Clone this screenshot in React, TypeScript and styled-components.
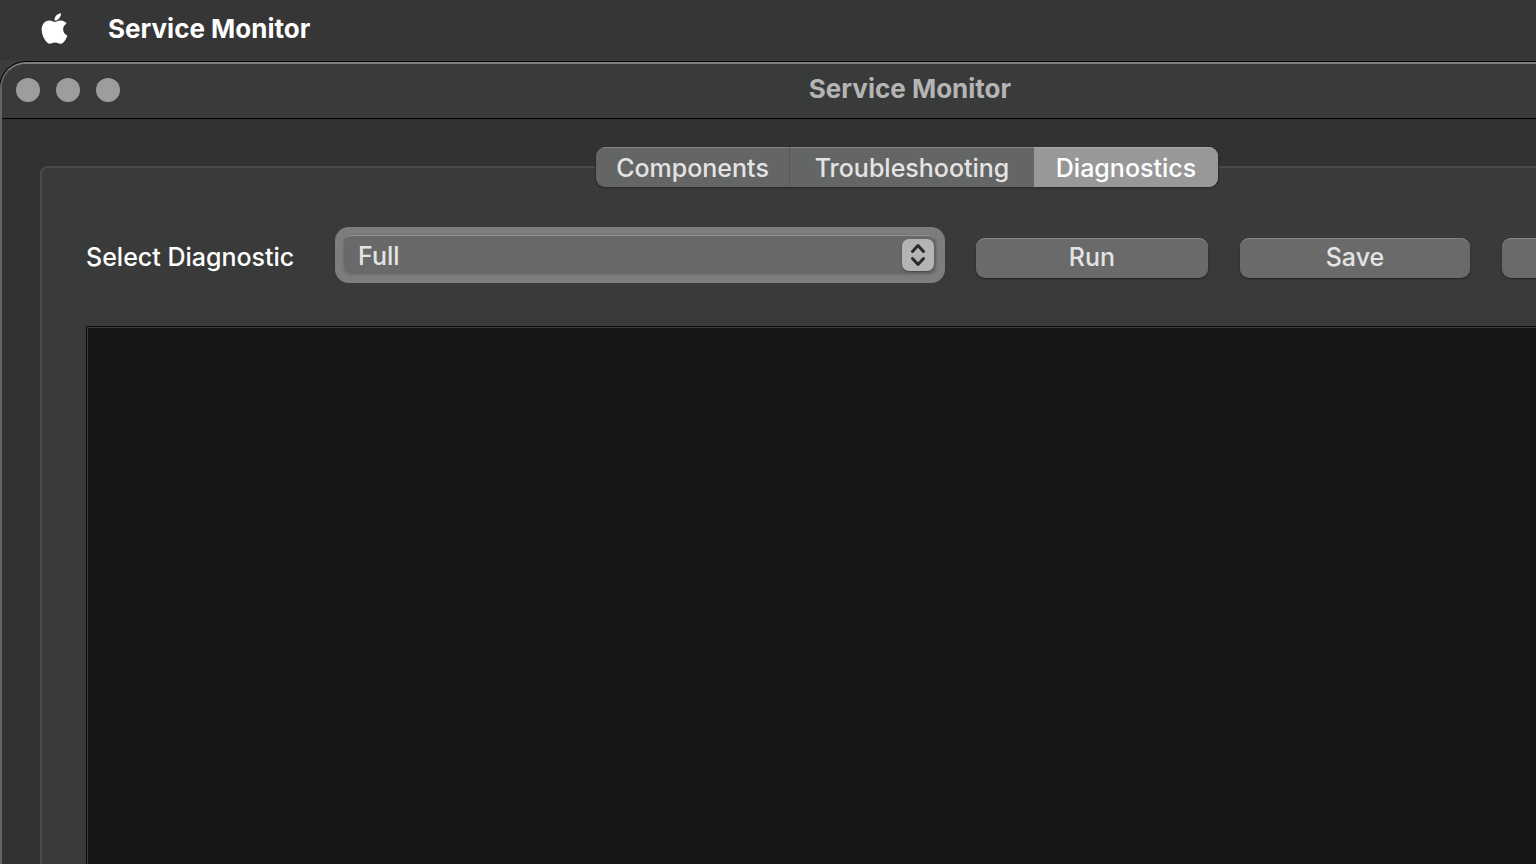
import React, { useState } from "react";
import styled, { createGlobalStyle } from "styled-components";
import { FaApple } from "react-icons/fa";

const GlobalStyle = createGlobalStyle`
  *, *::before, *::after { box-sizing: border-box; }
  body { margin: 0; background: #3c3c3c; }
  body, button, select, textarea {
    font-family: Inter, "Liberation Sans", sans-serif;
    font-size: 25px;
    font-weight: 500;
    line-height: 32px;
  }
`;

const Desktop = styled.div`
  display: flex;
  flex-direction: column;
  height: 100vh;
  overflow: hidden;
`;

const MenuBar = styled.header`
  display: flex;
  align-items: center;
  flex: none;
  gap: 36px;
  height: 60px;
  padding: 0 37px 3px;
  background: #363636;
  color: #fff;
`;

const AppName = styled.span`
  font-size: 26px;
  font-weight: 700;
`;

/* The window is wider than the screen and runs off its right side. */
const Window = styled.main`
  display: flex;
  flex-direction: column;
  flex: 1;
  min-height: 0;
  width: calc(100% + 284px);
  margin-top: 2px;
  border: 2px solid #646564;
  border-top-color: #807f80;
  border-bottom: 0;
  border-radius: 26px 26px 0 0;
  background: #313332;
  box-shadow: 0 0 0 1px #000;
  overflow: hidden;
`;

const TitleBar = styled.div`
  display: grid;
  grid-template-columns: 1fr auto 1fr;
  align-items: center;
  flex: none;
  height: 55px;
  padding: 0 14px 4px;
  border-bottom: 1px solid #000;
  background: #393b3a;
`;

const WindowControls = styled.div`
  display: flex;
  gap: 16px;
  padding-top: 2px;
`;

const WindowControl = styled.button`
  width: 24px;
  height: 24px;
  padding: 0;
  border: 0;
  border-radius: 50%;
  background: #9d9d9d;
`;

const Title = styled.h1`
  margin: 0;
  font-size: 26px;
  font-weight: 700;
  line-height: 32px;
  color: #b5b5b5;
`;

const Content = styled.div`
  display: flex;
  flex-direction: column;
  flex: 1;
  min-height: 0;
  padding: 47px 48px 0 38px;
`;

const Group = styled.section`
  display: flex;
  flex-direction: column;
  flex: 1;
  min-height: 0;
  padding: 0 40px 0 44px;
  border: 2px solid #4a4b4a;
  border-bottom: 0;
  border-radius: 8px 8px 0 0;
  background: #393b3a;
`;

const Tabs = styled.div`
  display: flex;
  align-self: center;
  flex: none;
  height: 40px;
  margin-top: -21px;
  border-radius: 9px;
  background: #646665;
  box-shadow: 0 0 0 1px #2c2d2c, 0 1px 2px #222;
  overflow: hidden;
`;

const Tab = styled.button<{ $width: number; $selected: boolean; $divided: boolean }>`
  width: ${(p) => p.$width}px;
  padding: 2px 0 0;
  border: 0;
  border-right: ${(p) => (p.$divided ? "1px solid #555655" : "0")};
  background: ${(p) => (p.$selected ? "#989898" : "transparent")};
  box-shadow: inset 0 1px 0 ${(p) => (p.$selected ? "#a8a8a8" : "#868786")};
  color: ${(p) => (p.$selected ? "#fff" : "#e4e4e4")};
`;

const Toolbar = styled.div`
  display: grid;
  grid-template-columns: 249px 610px auto;
  align-items: center;
  flex: none;
  margin-top: 40px;
`;

const Label = styled.label`
  padding-top: 4px;
  color: #fff;
`;

const SelectFrame = styled.div`
  display: grid;
  align-items: center;
  height: 56px;
  padding: 8px;
  border-radius: 14px;
  background: #7d7d7d;
  > * { grid-area: 1 / 1; }
`;

const Select = styled.select`
  appearance: none;
  width: 100%;
  height: 40px;
  padding: 2px 48px 0 14px;
  border: 1px solid #747474;
  border-top-color: #929292;
  border-radius: 8px;
  outline: 1px solid #767676;
  background: #696969;
  color: #e4e4e4;
`;

const Stepper = styled.span`
  display: flex;
  justify-self: end;
  width: 32px;
  height: 32px;
  margin-right: 3px;
  border-radius: 7px;
  background: #b4b4b4;
  box-shadow: 0 1px 2px #444;
  pointer-events: none;
`;

const Actions = styled.div`
  display: grid;
  grid-template-columns: 232px 230px 230px;
  gap: 32px;
  padding: 6px 0 0 31px;
`;

const Button = styled.button`
  height: 40px;
  padding: 0 0 2px;
  border: 0;
  border-radius: 9px;
  background: #6a6a6a;
  box-shadow: inset 0 1px 0 #858585, 0 1px 2px #222;
  color: #e4e4e4;
`;

const Output = styled.textarea`
  display: block;
  flex: 1;
  min-height: 0;
  width: 100%;
  margin-top: 43px;
  padding: 8px;
  border: 1px solid #0c0c0c;
  border-bottom: 0;
  border-radius: 0;
  outline: 0;
  background: #161817;
  box-shadow: inset 1px 1px 0 #3a3b3a;
  color: #fff;
  resize: none;
`;

const TABS = [
  { name: "Components", width: 194 },
  { name: "Troubleshooting", width: 244 },
  { name: "Diagnostics", width: 184 },
];

export default function App() {
  const [selected, setSelected] = useState("Diagnostics");
  return (
    <>
      <GlobalStyle />
      <Desktop>
        <MenuBar>
          <FaApple size={35} aria-label="Apple menu" />
          <AppName>Service Monitor</AppName>
        </MenuBar>
        <Window>
          <TitleBar>
            <WindowControls>
              <WindowControl aria-label="Close" />
              <WindowControl aria-label="Minimize" />
              <WindowControl aria-label="Zoom" />
            </WindowControls>
            <Title>Service Monitor</Title>
          </TitleBar>
          <Content>
            <Group>
              <Tabs role="tablist">
                {TABS.map((tab, i) => (
                  <Tab
                    key={tab.name}
                    role="tab"
                    aria-selected={tab.name === selected}
                    $width={tab.width}
                    $selected={tab.name === selected}
                    $divided={i === 0}
                    onClick={() => setSelected(tab.name)}
                  >
                    {tab.name}
                  </Tab>
                ))}
              </Tabs>
              <Toolbar>
                <Label htmlFor="diagnostic">Select Diagnostic</Label>
                <SelectFrame>
                  <Select id="diagnostic" defaultValue="Full">
                    <option>Full</option>
                  </Select>
                  <Stepper>
                    <svg width="32" height="32" viewBox="0 0 32 32" fill="none" stroke="#2b2b2b" strokeWidth="3" strokeLinecap="round" strokeLinejoin="round" aria-hidden="true">
                      <path d="M10.5 12.5 16 6.5l5.5 6M10.5 19.500l5.500 6 5.500-6" />
                    </svg>
                  </Stepper>
                </SelectFrame>
                <Actions>
                  <Button>Run</Button>
                  <Button>Save</Button>
                  <Button aria-label="Clear" />
                </Actions>
              </Toolbar>
              <Output aria-label="Diagnostic output" readOnly />
            </Group>
          </Content>
        </Window>
      </Desktop>
    </>
  );
}
